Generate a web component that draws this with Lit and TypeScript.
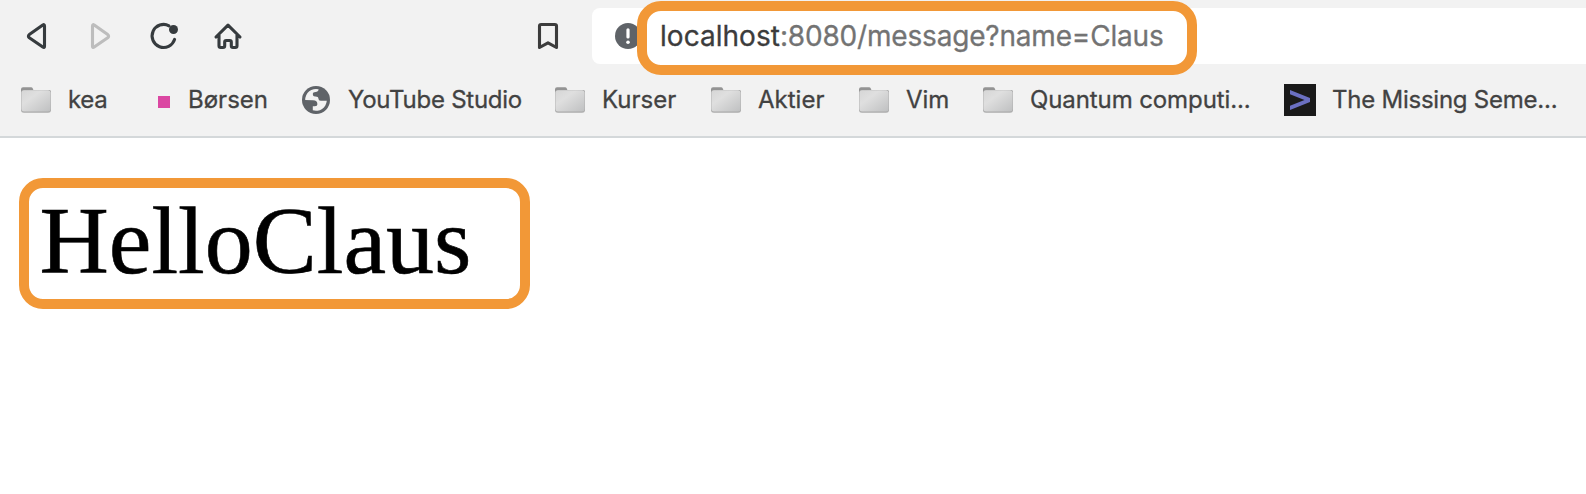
import { LitElement, html, css, svg } from "lit";
import { customElement, property } from "lit/decorators.js";

type Kind = "folder" | "square" | "globe" | "prompt";
interface Bookmark { kind: Kind; label: string; cls: string }

const bookmarks: Bookmark[] = [
  { kind: "folder", label: "kea", cls: "kea" },
  { kind: "square", label: "Børsen", cls: "borsen" },
  { kind: "globe", label: "YouTube Studio", cls: "youtube" },
  { kind: "folder", label: "Kurser", cls: "kurser" },
  { kind: "folder", label: "Aktier", cls: "aktier" },
  { kind: "folder", label: "Vim", cls: "vim" },
  { kind: "folder", label: "Quantum computi...", cls: "quantum" },
  { kind: "prompt", label: "The Missing Seme...", cls: "missing" },
];

@customElement("bookmark-icon")
class BookmarkIcon extends LitElement {
  @property() kind: Kind = "folder";
  static styles = css`
    :host { display: block; width: 32px; height: 32px; flex: none; }
    svg { display: block; }
  `;
  render() {
    return html`<svg width="32" height="32" viewBox="0 0 32 32">${this.art()}</svg>`;
  }
  private art() {
    switch (this.kind) {
      case "folder":
        return svg`
          <defs>
            <linearGradient id="f" x1="0" y1="0" x2="1" y2="1">
              <stop offset="0" stop-color="#d6d6d6"/><stop offset=".35" stop-color="#dfdfdf"/><stop offset="1" stop-color="#bfc0c1"/>
            </linearGradient>
          </defs>
          <path d="M1 9V5.2Q1 3.3 3 3.3H11Q12.3 3.3 12.8 4.5L13.4 6H29Q31 6 31 8V9Z" fill="#949494"/>
          <rect x="1" y="8" width="30" height="21" rx="3" fill="#c4c4c4"/>
          <rect x="1" y="6" width="30" height="22.2" rx="3" fill="#a9a9a9"/>
          <rect x="1.4" y="6.2" width="29.2" height="21.2" rx="2.6" fill="url(#f)"/>`;
      case "square":
        return svg`<rect x="10" y="12" width="12" height="12" fill="#db47a2"/>`;
      case "globe":
        return svg`
          <circle cx="16" cy="16" r="14" fill="#5f6368"/>
          <path d="M5.2 16A10.8 10.8 0 0 1 18.6 5.2C18.4 7 17.4 7.9 15.6 7.9Q12.8 7.9 12.8 10.2Q12.8 12.4 15 12.4Q18.4 12.2 18.4 14.6Q18.4 16.8 20.8 16.8H26.8A10.9 10.9 0 0 1 12.8 26.3V22.3H15Q17.4 22.3 17.4 20.2Q17.4 16.2 13 16.2Z" fill="#f2f2f2"/>`;
      default:
        return svg`<rect width="32" height="32" fill="#1a1a1a"/><path d="M6 6L26 14V18L6 26V21.8L20.5 16L6 10.2Z" fill="#6b70c2"/>`;
    }
  }
}

@customElement("app-root")
class AppRoot extends LitElement {
  static styles = css`
    :host { display: block; height: 494px; background: #fff; overflow: hidden; font-family: Inter, sans-serif; color: #424242; }
    .chrome { height: 138px; background: #f2f2f2; border-bottom: 2px solid #d4d8da; box-sizing: border-box; }
    .toolbar { display: flex; align-items: center; height: 56px; padding-top: 8px; }
    .nav { width: 592px; flex: none; display: block; }
    .address { flex: 1; height: 56px; background: #fff; border-radius: 8px 0 0 8px; display: flex; align-items: center; position: relative; }
    .info { margin-left: 23px; flex: none; }
    .url { margin-left: 19px; font-size: 28px; line-height: 36px; color: #737373; white-space: nowrap; position: relative; letter-spacing: -0.18px; -webkit-text-stroke: 0.3px currentColor; }
    .host { color: #3c3c3c; letter-spacing: 0.03px; }
    .ring { box-sizing: border-box; border: 10px solid #f29837; border-radius: 24px; }
    .url-ring { position: absolute; left: 45px; top: -7px; width: 560px; height: 74px; background: #fff; }
    .bookmarks { display: flex; align-items: center; height: 32px; margin-top: 20px; padding-left: 20px; }
    .bookmark { display: flex; align-items: center; gap: 16px; flex: none; font-size: 24px; line-height: 32px; white-space: nowrap; -webkit-text-stroke: 0.3px currentColor; }
    .kea { width: 128px; letter-spacing: -0.35px; }
    .borsen { width: 152px; gap: 8px; }
    .youtube { width: 254px; letter-spacing: -0.25px; }
    .kurser { width: 156px; }
    .aktier { width: 148px; }
    .vim { width: 124px; }
    .quantum { width: 302px; letter-spacing: -0.1px; }
    .missing { width: 300px; letter-spacing: -0.24px; }
    .page { padding: 40px 19px; }
    .message { width: 511px; height: 131px; }
    .message p { margin: 0; padding-left: 10.5px; font: 96px/106px "Liberation Serif", serif; color: #000; -webkit-text-stroke: 0.6px #000; }
  `;
  render() {
    return html`
      <header class="chrome">
        <div class="toolbar">
          <svg class="nav" width="592" height="56" viewBox="0 8 592 56" fill="none" stroke="#363b3e" stroke-width="3.1" stroke-linejoin="round" stroke-linecap="round">
            <path d="M44.5 26V46.2Q44.5 48.2 42.8 47L29.3 37.8Q27.5 36.2 29.3 34.6L42.8 25Q44.5 24 44.5 26Z"/>
            <path d="M92.5 26V46.2Q92.5 48.2 94.2 47L107.7 37.8Q109.5 36.2 107.7 34.6L94.2 25Q92.5 24 92.5 26Z" stroke="#bdbdbd"/>
            <path d="M169 25.8A11.5 11.5 0 1 0 174.6 39.4"/>
            <circle cx="173.5" cy="29.5" r="4.5" fill="#363b3e" stroke="none"/>
            <path d="M216 37L228 25.2L240 37M219 35V45.8Q219 47.5 220.7 47.5H223Q224.7 47.5 224.7 45.8V42Q224.7 40.5 226.2 40.5H229.8Q231.3 40.5 231.3 42V45.8Q231.3 47.5 233 47.5H235.3Q237 47.5 237 45.8V35"/>
            <path d="M539.5 47.5V26.2Q539.5 24.5 541.2 24.5H554.8Q556.5 24.5 556.5 26.2V47.5L548 42.8Z" stroke="#3c3c3c"/>
          </svg>
          <div class="address">
            <svg class="info" width="26" height="26" viewBox="0 0 26 26"><circle cx="13" cy="13" r="13" fill="#5f6368"/><path d="M13 6.8V14" stroke="#fff" stroke-width="3.2" stroke-linecap="round"/><circle cx="13" cy="19.3" r="1.8" fill="#fff"/></svg>
            <div class="ring url-ring"></div>
            <div class="url"><span class="host">localhost</span>:8080/message?name=Claus</div>
          </div>
        </div>
        <nav class="bookmarks">
          ${bookmarks.map(b => html`<div class="bookmark ${b.cls}"><bookmark-icon .kind=${b.kind}></bookmark-icon><span>${b.label}</span></div>`)}
        </nav>
      </header>
      <main class="page"><div class="ring message"><p>HelloClaus</p></div></main>
    `;
  }
}
